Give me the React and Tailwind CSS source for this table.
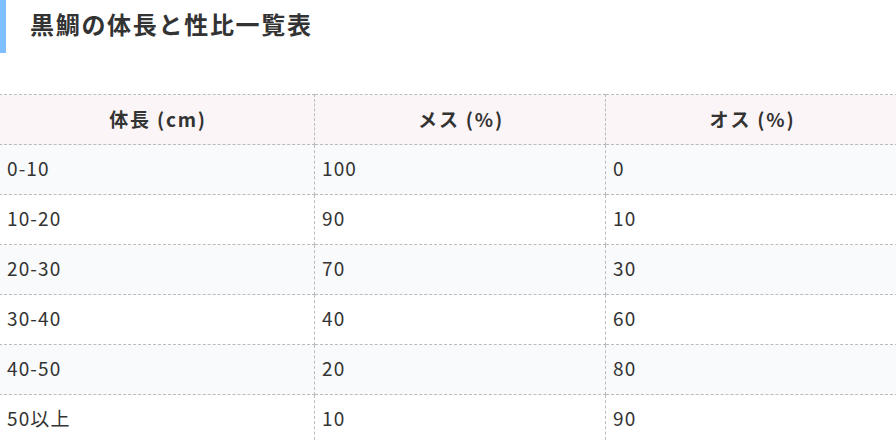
import React from "react";

const rows = [
  ["0-10", "100", "0"],
  ["10-20", "90", "10"],
  ["20-30", "70", "30"],
  ["30-40", "40", "60"],
  ["40-50", "20", "80"],
  ["50以上", "10", "90"],
];

export default function App() {
  return (
    <div
      className="h-[441px] w-[896px] overflow-hidden bg-white text-[#333]"
      style={{ fontFamily: '"Noto Sans CJK JP", "Noto Sans", sans-serif' }}
    >
      <div className="flex h-[53px] items-start border-l-[6px] border-[#80bfff] pl-[24px] pt-[12px]">
        <h2 className="text-[24px] font-bold leading-none tracking-[1.7px] text-[#333]">
          黒鯛の体長と性比一覧表
        </h2>
      </div>
      <div className="mt-[41px] -ml-px">
        <table className="w-[898px] table-fixed border-collapse text-[19px]">
          <colgroup>
            <col className="w-[315px]" />
            <col className="w-[291px]" />
            <col className="w-[292px]" />
          </colgroup>
          <thead>
            <tr className="h-[50px] bg-[#fcf5f7]">
              {["体長 (cm)", "メス (%)", "オス (%)"].map((h) => (
                <th
                  key={h}
                  className="border border-dashed border-[#bbb] p-0 pl-[2px] text-center font-bold tracking-[1.8px]"
                >
                  {h}
                </th>
              ))}
            </tr>
          </thead>
          <tbody>
            {rows.map((r, i) => (
              <tr key={i} className={`h-[50px] ${i % 2 === 0 ? "bg-[#f9fafc]" : "bg-white"}`}>
                {r.map((c, j) => (
                  <td
                    key={j}
                    className="border border-dashed border-[#bbb] pt-0 pb-[3px] pl-[7px] pr-0 text-left tracking-[1.1px]"
                  >
                    {c}
                  </td>
                ))}
              </tr>
            ))}
          </tbody>
        </table>
      </div>
    </div>
  );
}
